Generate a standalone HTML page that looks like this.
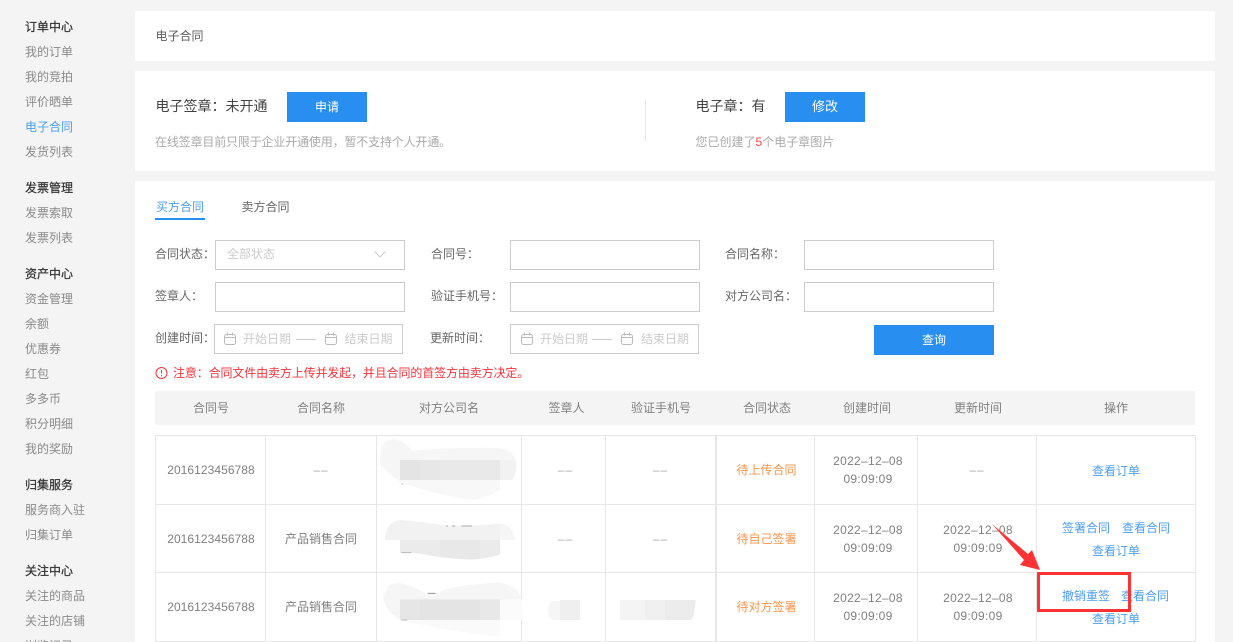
<!DOCTYPE html>
<html lang="zh-CN"><head><meta charset="utf-8"><title>电子合同</title>
<style>
html,body{margin:0;padding:0;width:1233px;height:642px;overflow:hidden;background:#f4f4f4}
body{position:relative;font-family:"Liberation Sans","Noto Sans CJK SC",sans-serif;font-size:12px;color:#666}
.a,.t,.c,.b,.i{position:absolute}
.t,.c{line-height:20px;white-space:nowrap}
.c{text-align:center}
.card{position:absolute;left:135px;width:1080px;background:#fff}
.s{left:25px;color:#8a8a8a}
.h{left:25px;color:#333;-webkit-text-stroke:.25px #333}
.b{background:#288ff0;color:#fff;text-align:center;line-height:30px;width:80px;height:30px}
.i{box-sizing:border-box;border:1px solid #ccc;background:#fff;height:30px;width:190px}
.l{color:#666}
.ph{color:#ccc}
.n{color:#808080}
.d{color:#808080;letter-spacing:.3px;line-height:18px;white-space:normal}
.x{color:#aaa;letter-spacing:1px}
.o{color:#f8954c}
.k{color:#4c9ef0}
.v{position:absolute;background:#e6e6e6;width:1px;top:435px;height:207px}
.r{position:absolute;background:#e6e6e6;height:1px;left:155px;width:1041px}
svg{position:absolute;left:0;top:0}
</style></head>
<body>
<div class="t h" style="top:17px">订单中心</div>
<div class="t s" style="top:42px">我的订单</div>
<div class="t s" style="top:67px">我的竞拍</div>
<div class="t s" style="top:92px">评价晒单</div>
<div class="t s" style="top:117px;color:#4c9ef0">电子合同</div>
<div class="t s" style="top:142px">发货列表</div>
<div class="t h" style="top:178px">发票管理</div>
<div class="t s" style="top:203px">发票索取</div>
<div class="t s" style="top:228px">发票列表</div>
<div class="t h" style="top:264px">资产中心</div>
<div class="t s" style="top:289px">资金管理</div>
<div class="t s" style="top:314px">余额</div>
<div class="t s" style="top:339px">优惠券</div>
<div class="t s" style="top:364px">红包</div>
<div class="t s" style="top:389px">多多币</div>
<div class="t s" style="top:414px">积分明细</div>
<div class="t s" style="top:439px">我的奖励</div>
<div class="t h" style="top:475px">归集服务</div>
<div class="t s" style="top:500px">服务商入驻</div>
<div class="t s" style="top:525px">归集订单</div>
<div class="t h" style="top:561px">关注中心</div>
<div class="t s" style="top:586px">关注的商品</div>
<div class="t s" style="top:611px">关注的店铺</div>
<div class="t s" style="top:636px">浏览记录</div>

<div class="card" style="top:11px;height:50px"></div>
<div class="card" style="top:71px;height:100px"></div>
<div class="card" style="top:181px;height:461px"></div>

<div class="t" style="left:155.500px;top:26px;color:#5c5c5c">电子合同</div>

<div class="t" style="left:155.500px;top:96px;font-size:14px;color:#444">电子签章：未开通</div>
<div class="b" style="left:287px;top:92px">申请</div>
<div class="t" style="left:155px;top:132px;color:#aaa;letter-spacing:-.16px">在线签章目前只限于企业开通使用，暂不支持个人开通。</div>
<div class="a" style="left:645px;top:101px;width:1px;height:40px;background:#e6e6e6"></div>
<div class="t" style="left:695.500px;top:96px;font-size:14px;color:#444">电子章：有</div>
<div class="b" style="left:785px;top:92px;font-size:13px">修改</div>
<div class="t" style="left:695.500px;top:132px;color:#aaa">您已创建了<span style="color:#f44">5</span>个电子章图片</div>

<div class="t" style="left:156px;top:197px;color:#4c9ef0">买方合同</div>
<div class="a" style="left:155px;top:218px;width:50px;height:2px;background:#288ff0"></div>
<div class="t" style="left:241.500px;top:197px;color:#666">卖方合同</div>

<div class="t l" style="left:155px;top:244px">合同状态：</div>
<div class="i" style="left:215px;top:240px"></div>
<div class="t ph" style="left:227px;top:244px">全部状态</div>
<div class="t l" style="left:431px;top:244px">合同号：</div>
<div class="i" style="left:510px;top:240px"></div>
<div class="t l" style="left:725px;top:244px">合同名称：</div>
<div class="i" style="left:804px;top:240px"></div>

<div class="t l" style="left:155px;top:286px">签章人：</div>
<div class="i" style="left:215px;top:282px"></div>
<div class="t l" style="left:431px;top:286px">验证手机号：</div>
<div class="i" style="left:510px;top:282px"></div>
<div class="t l" style="left:725px;top:286px">对方公司名：</div>
<div class="i" style="left:804px;top:282px"></div>

<div class="t l" style="left:155px;top:328px">创建时间：</div>
<div class="i" style="left:214px;top:324px;width:189px"></div>
<div class="t ph" style="left:243px;top:329px">开始日期</div>
<div class="t ph" style="left:344.500px;top:329px">结束日期</div>
<div class="t l" style="left:430px;top:328px">更新时间：</div>
<div class="i" style="left:510px;top:324px;width:189px"></div>
<div class="t ph" style="left:540px;top:329px">开始日期</div>
<div class="t ph" style="left:641px;top:329px">结束日期</div>
<div class="b" style="left:874px;top:325px;width:120px">查询</div>

<div class="t" style="left:173px;top:363px;color:#f4333c;letter-spacing:-.13px">注意：合同文件由卖方上传并发起，并且合同的首签方由卖方决定。</div>

<div class="a" style="left:155px;top:391px;width:1040px;height:34px;background:#f4f4f4"></div>
<div class="c n" style="left:156px;width:110px;top:398px">合同号</div>
<div class="c n" style="left:266px;width:110px;top:398px">合同名称</div>
<div class="c n" style="left:377px;width:144px;top:398px">对方公司名</div>
<div class="c n" style="left:525px;width:83px;top:398px">签章人</div>
<div class="c n" style="left:606px;width:110px;top:398px">验证手机号</div>
<div class="c n" style="left:717px;width:100px;top:398px">合同状态</div>
<div class="c n" style="left:816px;width:102px;top:398px">创建时间</div>
<div class="c n" style="left:919px;width:118px;top:398px">更新时间</div>
<div class="c n" style="left:1037px;width:158px;top:398px">操作</div>

<div class="r" style="top:435px"></div>
<div class="r" style="top:504px"></div>
<div class="r" style="top:572px"></div>
<div class="r" style="top:641px"></div>
<div class="v" style="left:155px"></div>
<div class="v" style="left:265px"></div>
<div class="v" style="left:376px"></div>
<div class="v" style="left:521px"></div>
<div class="v" style="left:605px"></div>
<div class="v" style="left:715px;width:2px"></div>
<div class="v" style="left:814px"></div>
<div class="v" style="left:917px"></div>
<div class="v" style="left:1036px"></div>
<div class="v" style="left:1195px"></div>

<div class="c n" style="left:156.500px;width:109px;top:460px;letter-spacing:.06px">2016123456788</div>
<div class="c x" style="left:266px;width:110px;top:460px">––</div>
<div class="c x" style="left:524px;width:83px;top:460px">––</div>
<div class="c x" style="left:606px;width:109px;top:460px">––</div>
<div class="c o" style="left:718px;width:97px;top:460px">待上传合同</div>
<div class="c d" style="left:817px;width:102px;top:452px">2022–12–08<br>09:09:09</div>
<div class="c x" style="left:918px;width:118px;top:460px">––</div>
<div class="c k" style="left:1037px;width:158px;top:461px">查看订单</div>

<div class="c n" style="left:156.500px;width:109px;top:529px;letter-spacing:.06px">2016123456788</div>
<div class="c n" style="left:266px;width:110px;top:529px">产品销售合同</div>
<div class="c x" style="left:524px;width:83px;top:529px">––</div>
<div class="c x" style="left:606px;width:109px;top:529px">––</div>
<div class="c o" style="left:718px;width:97px;top:529px">待自己签署</div>
<div class="c d" style="left:817px;width:102px;top:521px">2022–12–08<br>09:09:09</div>
<div class="c d" style="left:919px;width:118px;top:521px">2022–12–08<br>09:09:09</div>
<div class="t k" style="left:1062px;top:518px">签署合同</div>
<div class="t k" style="left:1122px;top:518px">查看合同</div>
<div class="c k" style="left:1037px;width:158px;top:541px">查看订单</div>

<div class="c n" style="left:156.500px;width:109px;top:597px;letter-spacing:.06px">2016123456788</div>
<div class="c n" style="left:266px;width:110px;top:597px">产品销售合同</div>
<div class="c o" style="left:718px;width:97px;top:597px">待对方签署</div>
<div class="c d" style="left:817px;width:102px;top:589px">2022–12–08<br>09:09:09</div>
<div class="c d" style="left:919px;width:118px;top:589px">2022–12–08<br>09:09:09</div>
<div class="t k" style="left:1062px;top:586px">撤销重签</div>
<div class="t k" style="left:1121px;top:586px">查看合同</div>
<div class="c k" style="left:1037px;width:158px;top:609px">查看订单</div>

<svg width="1233" height="642" viewBox="0 0 1233 642">
<!-- select chevron -->
<path d="M374.500 251.500l5.500 5.500 5.500-5.500" fill="none" stroke="#ccc" stroke-width="1"/>
<!-- calendars -->
<g fill="none" stroke="#bbb" stroke-width="1">
<rect x="224.500" y="334.500" width="11" height="10" rx="2"/><path d="M224.500 337.500h11M227.500 332.500v3M232.500 332.500v3"/>
<rect x="325.500" y="334.500" width="11" height="10" rx="2"/><path d="M325.500 337.500h11M328.500 332.500v3M333.500 332.500v3"/>
<rect x="521.500" y="334.500" width="11" height="10" rx="2"/><path d="M521.500 337.500h11M524.500 332.500v3M529.500 332.500v3"/>
<rect x="621.500" y="334.500" width="11" height="10" rx="2"/><path d="M621.500 337.500h11M624.500 332.500v3M629.500 332.500v3"/>
<path d="M296 339.500h20M592 339.500h20" stroke="#ccc"/>
</g>
<!-- warning icon -->
<circle cx="161.500" cy="373" r="5.500" fill="none" stroke="#f4333c"/>
<path d="M161.500 370v3.500M161.500 375v1.300" stroke="#f4333c" fill="none"/>
<!-- blurred blobs, drawn in 3x crop coordinates -->
<g transform="translate(376 436) scale(.33333)">
<path d="M12 60Q14 12 50 10Q80 10 110 45Q140 40 200 38Q300 34 370 36Q420 45 422 85Q420 125 408 132H372V160Q330 190 280 190Q200 180 75 140Q40 115 12 85Z" fill="#f6f6f6"/>
<rect x="72" y="72" width="60" height="60" fill="#e4e4e4"/>
<rect x="132" y="72" width="60" height="60" fill="#e7e7e7"/>
<rect x="192" y="72" width="180" height="60" fill="#e9e9e9"/>
<path d="M372 72H420Q421 110 408 132H372Z" fill="#f2f2f2"/>
<path d="M72 132H372V160Q330 190 280 190Q200 180 75 140Z" fill="#f8f8f8"/>

<path d="M27 310Q30 258 70 252Q130 255 200 268Q300 272 370 262Q412 268 417 312H372V355Q320 372 280 370Q200 368 130 352L72 350V312H27Z" fill="#f2f2f2"/>
<path d="M72 312H372V355Q320 372 280 370Q200 368 130 352L72 350Z" fill="#ebebeb"/>
<path d="M192 312H312V369L280 370Q230 369 192 362Z" fill="#e8e8e8"/>
<path d="M372 262Q412 268 417 312H372Z" fill="#f6f6f6"/>

<path d="M22 490Q26 442 70 440Q110 450 150 472L190 470Q215 448 370 440Q430 452 436 490L440 552H372V600Q300 595 180 575L72 552Q30 525 22 490Z" fill="#f6f6f6"/>
<rect x="72" y="490" width="60" height="62" fill="#e6e6e6"/>
<rect x="132" y="490" width="180" height="62" fill="#e4e4e4"/>
<rect x="312" y="490" width="60" height="62" fill="#e8e8e8"/>
<path d="M372 490H438L440 552H372Z" fill="#fbfbfb"/>
<path d="M72 552H372V600Q300 595 180 575Z" fill="#fafafa"/>
<path d="M155 472h24" stroke="#999" stroke-width="3"/>
<path d="M210 270h6M228 270h10M256 270h32" stroke="#aaa" stroke-width="3"/>
<path d="M76 144h6M76 350h30M76 552h18" stroke="#bbb" stroke-width="3"/>
</g>
<path d="M552 601h8v19h-8q-4-3-4-9 0-7 4-10z" fill="#f6f6f6"/>
<rect x="560" y="600" width="20" height="20" fill="#efefef"/>
<rect x="620" y="600" width="25" height="20" fill="#f4f4f4"/>
<rect x="645" y="600" width="20" height="20" fill="#f0f0f0"/>
<path d="M665 600h31l-3 18-3 2h-25z" fill="#ececec"/>
<!-- red box + arrow -->
<rect x="1038.500" y="573.500" width="91" height="37" fill="none" stroke="#f33" stroke-width="3"/>
<path d="M992 524L1028 554L1032 550L1040 570L1020 565L1024 560Z" fill="#f33"/>
</svg>
</body></html>
